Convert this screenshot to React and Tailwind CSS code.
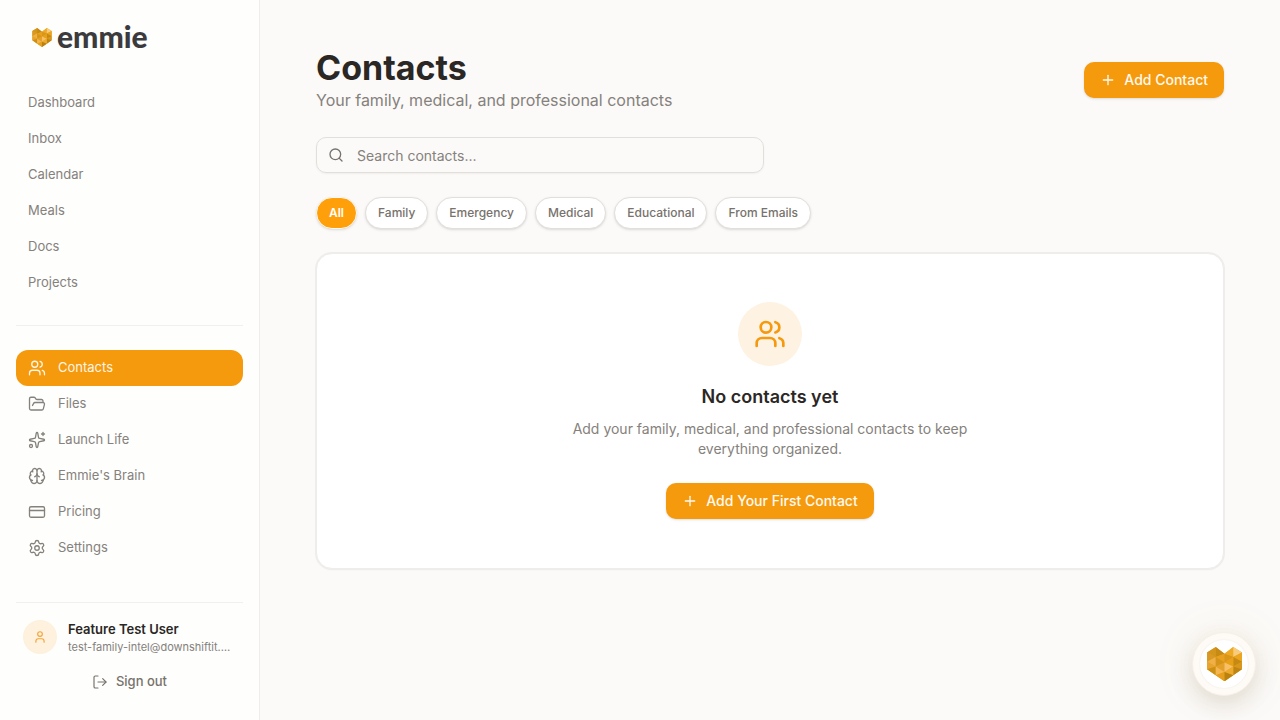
import React, { useState } from "react";
import {
  Users,
  FolderOpen,
  Sparkles,
  Brain,
  CreditCard,
  Settings,
  User,
  LogOut,
  Search,
  Plus,
} from "lucide-react";

const mainLinks = ["Dashboard", "Inbox", "Calendar", "Meals", "Docs", "Projects"];

const toolLinks = [
  { name: "Contacts", icon: Users },
  { name: "Files", icon: FolderOpen },
  { name: "Launch Life", icon: Sparkles },
  { name: "Emmie's Brain", icon: Brain },
  { name: "Pricing", icon: CreditCard },
  { name: "Settings", icon: Settings },
];

const filters = ["All", "Family", "Emergency", "Medical", "Educational", "From Emails"];

function HeartLogo({ className }) {
  return (
    <svg viewBox="0 0 104 102" className={className} aria-hidden="true">
      <path d="M26 0 52 20 78 0 104 16V66L52 102 0 66V16Z" fill="#e5a01f" />
      {/* left half */}
      <path d="M0 16 26 0V30Z" fill="#d3951c" />
      <path d="M0 16 26 30 0 44Z" fill="#d99a25" />
      <path d="M0 44 26 30V58Z" fill="#f0b048" />
      <path d="M0 44 26 58 0 66Z" fill="#e9a42f" />
      <path d="M0 66 26 58V84Z" fill="#cd9014" />
      <path d="M26 0 52 20 26 30Z" fill="#c58b15" />
      <path d="M26 30 52 20V46Z" fill="#e9a01f" />
      <path d="M26 30 52 46 26 58Z" fill="#d5951b" />
      <path d="M26 58 52 46V74Z" fill="#e3a02a" />
      <path d="M26 58 52 74 26 84Z" fill="#f3b650" />
      <path d="M26 84 52 74V102Z" fill="#e59f1d" />
      {/* right half */}
      <path d="M78 0 52 20 78 30Z" fill="#eea925" />
      <path d="M104 16 78 0V30Z" fill="#f9cb7c" />
      <path d="M104 16 78 30 104 44Z" fill="#eba51f" />
      <path d="M104 44 78 30V58Z" fill="#c68a14" />
      <path d="M104 44 78 58 104 66Z" fill="#d9971b" />
      <path d="M104 66 78 58V84Z" fill="#be8512" />
      <path d="M78 30 52 20V46Z" fill="#d9961b" />
      <path d="M78 30 52 46 78 58Z" fill="#e8a018" />
      <path d="M78 58 52 46V74Z" fill="#f7c066" />
      <path d="M78 58 52 74 78 84Z" fill="#eeaa2c" />
      <path d="M78 84 52 74V102Z" fill="#bb8210" />
    </svg>
  );
}

function Sidebar() {
  return (
    <aside className="w-[260px] shrink-0 flex flex-col border-r border-[#efedea] bg-[#fefefc] px-4 pb-5">
      <a href="#" className="flex h-[85px] items-start gap-[5px] pl-4 pt-5">
        <HeartLogo className="mt-2 h-[19px] w-5" />
        <span className="font-[Lato,sans-serif] text-[30px] leading-8 font-black text-[#3b3a3c]">
          emmie
        </span>
      </a>

      <nav className="flex flex-col text-[13px] text-[#85817c]">
        {mainLinks.map((name) => (
          <a key={name} href="#" className="flex h-9 items-center px-3">
            {name}
          </a>
        ))}

        <div className="mt-6 flex flex-col border-t border-[#f2f0ed] pt-6">
          {toolLinks.map(({ name, icon: Icon }) => (
            <a
              key={name}
              href="#"
              className={
                name === "Contacts"
                  ? "flex h-9 items-center gap-3 rounded-xl bg-[#f5990d] px-3 text-[#fff6e6]"
                  : "flex h-9 items-center gap-3 rounded-xl px-3"
              }
            >
              <Icon size={18} strokeWidth={1.75} />
              {name}
            </a>
          ))}
        </div>
      </nav>

      {/* Signed-in user */}
      <div className="mt-auto border-t border-[#f2f0ed] pt-4">
        <div className="flex items-center gap-3 px-2">
          <div className="flex size-8 shrink-0 items-center justify-center rounded-full bg-[#fef1dd] text-[#f2a63a] ring-1 ring-[#fdf0dd]">
            <User size={14} />
          </div>
          <div>
            <p className="text-[13px] leading-5 font-semibold text-[#2b2724]">Feature Test User</p>
            <p className="text-[11px] leading-4 whitespace-nowrap text-[#85817c]">
              test-family-intel@downshiftit.…
            </p>
          </div>
        </div>
        <button className="mt-[9px] flex h-9 w-full items-center justify-center gap-2 text-[13px] font-medium text-[#77726c]">
          <LogOut size={16} strokeWidth={1.75} />
          Sign out
        </button>
      </div>
    </aside>
  );
}

function AddButton({ children }) {
  return (
    <button className="flex h-9 items-center gap-2 rounded-[10px] bg-[#f5990d] px-4 text-sm font-medium text-[#fffaf0] shadow-sm">
      <Plus size={16} />
      {children}
    </button>
  );
}

export default function App() {
  const [search, setSearch] = useState("");
  const [filter, setFilter] = useState("All");

  return (
    <div className="flex min-h-screen bg-[#fbfaf8] font-[Inter,sans-serif]">
      <Sidebar />

      <main className="min-w-0 flex-1 px-14 pt-12">
        <header className="flex items-center justify-between">
          <div>
            <h1 className="text-[34px] leading-10 font-bold text-[#2b2724]">Contacts</h1>
            <p className="text-base text-[#85817c]">
              Your family, medical, and professional contacts
            </p>
          </div>
          <AddButton>Add Contact</AddButton>
        </header>

        <div className="relative mt-[25px] max-w-md">
          <Search size={16} className="absolute left-3 top-[10px] text-[#77726c]" />
          <input
            type="text"
            aria-label="Search contacts"
            placeholder="Search contacts..."
            value={search}
            onChange={(e) => setSearch(e.target.value)}
            className="h-9 w-full rounded-[10px] border border-[#e2dfdb] pl-10 pr-3 text-sm shadow-xs placeholder:text-[#85817c]"
          />
        </div>

        <div className="mt-6 flex flex-wrap gap-2">
          {filters.map((name) => (
            <button
              key={name}
              onClick={() => setFilter(name)}
              className={
                filter === name
                  ? "h-8 rounded-full border border-[#fbfaf8] bg-[#ffa00a] px-3 text-xs font-semibold text-white shadow-sm"
                  : "h-8 rounded-full border border-[#e2dfdb] bg-white px-3 text-xs font-medium text-[#77726c] shadow-sm"
              }
            >
              {name}
            </button>
          ))}
        </div>

        {/* Empty state */}
        <section className="mt-6 flex flex-col items-center rounded-2xl border border-[#efedeb] bg-white px-6 pt-12 pb-[49px] text-center shadow-xs ring-1 ring-[#efedeb]">
          <div className="flex size-16 items-center justify-center rounded-full bg-[#fef3e2] text-[#f5990d]">
            <Users size={32} />
          </div>
          <h2 className="mt-[17px] text-lg leading-7 font-semibold text-[#2b2724]">No contacts yet</h2>
          <p className="mt-2 max-w-[420px] text-sm text-[#85817c]">
            Add your family, medical, and professional contacts to keep everything organized.
          </p>
          <div className="mt-6">
            <AddButton>Add Your First Contact</AddButton>
          </div>
        </section>
      </main>

      {/* Assistant launcher */}
      <button
        aria-label="Open Emmie"
        className="fixed bottom-6 right-6 flex size-16 items-center justify-center rounded-full border border-[#f6efe5] bg-[#fefbf6] shadow-[0_8px_24px_rgba(80,60,30,0.16),0_0_48px_rgba(245,160,60,0.08)]"
      >
        <span className="flex size-12 items-center justify-center rounded-full bg-white shadow-[0_0_2px_rgba(0,0,0,0.08)]">
          <HeartLogo className="w-[35px]" />
        </span>
      </button>
    </div>
  );
}
